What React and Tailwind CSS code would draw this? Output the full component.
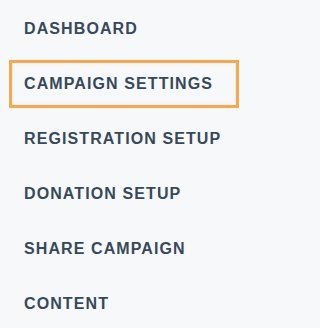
import React from 'react';

const ITEMS = [
  'DASHBOARD',
  'CAMPAIGN SETTINGS',
  'REGISTRATION SETUP',
  'DONATION SETUP',
  'SHARE CAMPAIGN',
  'CONTENT',
];

export default function App() {
  const active = 'CAMPAIGN SETTINGS';

  return (
    <div className="w-full min-h-screen bg-[#f7f8fa] pt-[5px] font-['Liberation_Sans',Arial,sans-serif]">
      <nav className="w-[248px] px-[9px] flex flex-col gap-[7px]">
        {ITEMS.map((item) => (
          <a
            key={item}
            href="#"
            className={`h-[48px] flex items-center px-[12px] border-[3px] text-[16px] font-bold tracking-[1.1px] text-[#36495a] whitespace-nowrap ${
              item === active ? 'border-[#f6a84c] shadow-[inset_0_0_3px_rgba(0,0,0,0.08)]' : 'border-transparent'
            }`}
          >
            {item}
          </a>
        ))}
      </nav>
    </div>
  );
}
